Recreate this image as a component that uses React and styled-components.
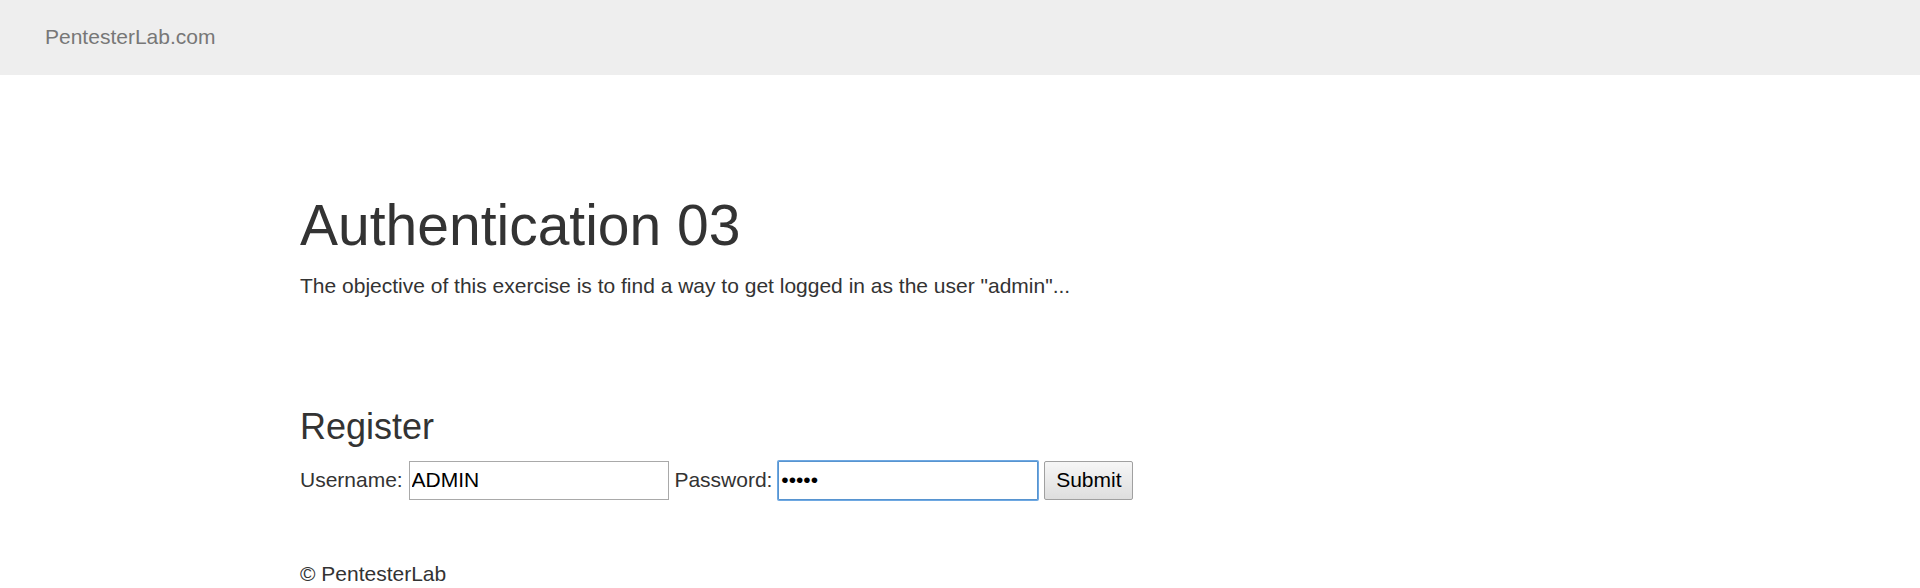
import React from "react";
import styled, { createGlobalStyle } from "styled-components";

const GlobalStyle = createGlobalStyle`
  *, *::before, *::after { box-sizing: border-box; }
  body {
    margin: 0;
    background: #fff;
    color: #333;
    font-family: "Liberation Sans", Arial, sans-serif;
    font-size: 21px;
    line-height: 30px;
  }
`;

const Navbar = styled.nav`
  display: flex;
  padding: 22px 45px 23px;
  background: #eee;
`;

const Brand = styled.a`
  color: #777;
  text-decoration: none;
`;

const Container = styled.div`
  max-width: 1320px;
  margin: 0 auto;
`;

const Intro = styled.header`
  padding-top: 120px;
`;

const Title = styled.h1`
  margin: 0 0 16px;
  font-size: 57px;
  font-weight: 400;
  line-height: 60px;
`;

const Text = styled.p`
  margin: 0;
`;

const Section = styled.section`
  padding-top: 106px;
`;

const Heading = styled.h2`
  margin: 0 0 15px;
  font-size: 36px;
  font-weight: 400;
  line-height: 39px;
`;

const Form = styled.form`
  margin: 0;
`;

const Input = styled.input`
  width: 260px;
  height: 39px;
  padding: 1px 2px 3px;
  border: 1px solid ${(p) => (p.$active ? "#5794d0" : "#a9a9a9")};
  border-radius: ${(p) => (p.$active ? "1px" : "0")};
  box-shadow: ${(p) => (p.$active ? "0 0 0 1px #6ea8e2" : "none")};
  background: #fff;
  color: #000;
  font: inherit;
  outline: none;
`;

const SubmitButton = styled.button`
  height: 39px;
  padding: 1px 11px 3px;
  border: 1px solid #a0a0a0;
  border-radius: 2px;
  background: linear-gradient(#f6f6f6, #dedede);
  color: #000;
  font: inherit;
`;

const Footer = styled.footer`
  padding-top: 59px;
`;

export default function App() {
  return (
    <>
      <GlobalStyle />
      <Navbar>
        <Brand href="#">PentesterLab.com</Brand>
      </Navbar>
      <Container>
        <Intro>
          <Title>Authentication 03</Title>
          <Text>
            The objective of this exercise is to find a way to get logged in as
            the user "admin"...
          </Text>
        </Intro>
        <Section>
          <Heading>Register</Heading>
          <Form onSubmit={(e) => e.preventDefault()}>
            <label htmlFor="username">Username:</label>{" "}
            <Input id="username" type="text" defaultValue="ADMIN" />{" "}
            <label htmlFor="password">Password:</label>{" "}
            <Input id="password" type="password" defaultValue="ADMIN" $active />{" "}
            <SubmitButton type="submit">Submit</SubmitButton>
          </Form>
        </Section>
        <Footer>
          <Text>© PentesterLab</Text>
        </Footer>
      </Container>
    </>
  );
}
